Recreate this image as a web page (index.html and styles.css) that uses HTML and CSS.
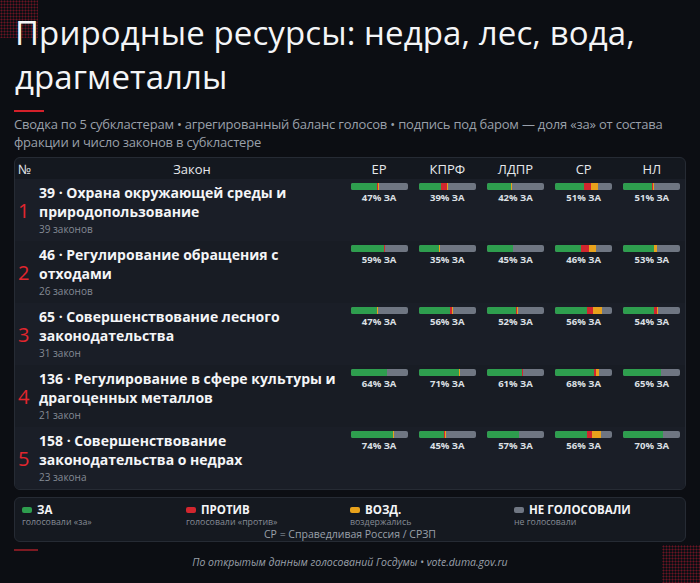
FILE: index.html
```html
<!DOCTYPE html>
<html lang="ru">
<head>
<meta charset="utf-8">
<link rel="stylesheet" href="styles.css">
</head>
<body>
<div class="dots dots-tl"></div>
<div class="dots dots-br"></div>
<main class="page">
  <h1 class="title">Природные ресурсы: недра, лес, вода, драгметаллы</h1>
  <div class="accent"></div>
  <p class="subtitle">Сводка по 5 субкластерам • агрегированный баланс голосов • подпись под баром — доля «за» от состава фракции и число законов в субкластере</p>

  <section class="table">
    <div class="row head">
      <div class="c-num">№</div>
      <div class="c-law">Закон</div>
      <div class="c-party">ЕР</div>
      <div class="c-party">КПРФ</div>
      <div class="c-party">ЛДПР</div>
      <div class="c-party">СР</div>
      <div class="c-party">НЛ</div>
    </div>

    <div class="row body odd">
      <div class="c-num num">1</div>
      <div class="c-law law"><div class="law-title">39 · Охрана окружающей среды и природопользование</div><div class="law-count">39 законов</div></div>
      <div class="cell"><div class="bar"><span class="g" style="width:47%"></span><span class="r" style="width:0.6%"></span><span class="o" style="width:1.2%"></span></div><div class="pct">47% ЗА</div></div>
      <div class="cell"><div class="bar"><span class="g" style="width:39%"></span><span class="r" style="width:10.5%"></span><span class="o" style="width:0.5%"></span></div><div class="pct">39% ЗА</div></div>
      <div class="cell"><div class="bar"><span class="g" style="width:42%"></span><span class="r" style="width:0.5%"></span><span class="o" style="width:1.2%"></span></div><div class="pct">42% ЗА</div></div>
      <div class="cell"><div class="bar"><span class="g" style="width:50.5%"></span><span class="r" style="width:12.5%"></span><span class="o" style="width:11.5%"></span></div><div class="pct">51% ЗА</div></div>
      <div class="cell"><div class="bar"><span class="g" style="width:51%"></span><span class="r" style="width:0.8%"></span><span class="o" style="width:1.5%"></span></div><div class="pct">51% ЗА</div></div>
    </div>

    <div class="row body even">
      <div class="c-num num">2</div>
      <div class="c-law law"><div class="law-title">46 · Регулирование обращения с отходами</div><div class="law-count">26 законов</div></div>
      <div class="cell"><div class="bar"><span class="g" style="width:58.5%"></span><span class="r" style="width:1%"></span></div><div class="pct">59% ЗА</div></div>
      <div class="cell"><div class="bar"><span class="g" style="width:35%"></span><span class="o" style="width:1.2%"></span></div><div class="pct">35% ЗА</div></div>
      <div class="cell"><div class="bar"><span class="g" style="width:45%"></span></div><div class="pct">45% ЗА</div></div>
      <div class="cell"><div class="bar"><span class="g" style="width:46%"></span><span class="r" style="width:13%"></span><span class="o" style="width:13%"></span></div><div class="pct">46% ЗА</div></div>
      <div class="cell"><div class="bar"><span class="g" style="width:53%"></span><span class="r" style="width:1.6%"></span><span class="o" style="width:5%"></span></div><div class="pct">53% ЗА</div></div>
    </div>

    <div class="row body odd">
      <div class="c-num num">3</div>
      <div class="c-law law"><div class="law-title">65 · Совершенствование лесного законодательства</div><div class="law-count">31 закон</div></div>
      <div class="cell"><div class="bar"><span class="g" style="width:46.5%"></span><span class="o" style="width:2%"></span></div><div class="pct">47% ЗА</div></div>
      <div class="cell"><div class="bar"><span class="g" style="width:55.5%"></span><span class="r" style="width:3%"></span><span class="o" style="width:1.2%"></span></div><div class="pct">56% ЗА</div></div>
      <div class="cell"><div class="bar"><span class="g" style="width:51.5%"></span><span class="r" style="width:2%"></span><span class="o" style="width:1.8%"></span></div><div class="pct">52% ЗА</div></div>
      <div class="cell"><div class="bar"><span class="g" style="width:56%"></span><span class="r" style="width:11%"></span><span class="o" style="width:15%"></span></div><div class="pct">56% ЗА</div></div>
      <div class="cell"><div class="bar"><span class="g" style="width:54%"></span><span class="r" style="width:4.6%"></span><span class="o" style="width:2%"></span></div><div class="pct">54% ЗА</div></div>
    </div>

    <div class="row body even">
      <div class="c-num num">4</div>
      <div class="c-law law"><div class="law-title">136 · Регулирование в сфере культуры и драгоценных металлов</div><div class="law-count">21 закон</div></div>
      <div class="cell"><div class="bar"><span class="g" style="width:64%"></span></div><div class="pct">64% ЗА</div></div>
      <div class="cell"><div class="bar"><span class="g" style="width:71%"></span><span class="o" style="width:1.2%"></span></div><div class="pct">71% ЗА</div></div>
      <div class="cell"><div class="bar"><span class="g" style="width:60.8%"></span><span class="r" style="width:1.6%"></span></div><div class="pct">61% ЗА</div></div>
      <div class="cell"><div class="bar"><span class="g" style="width:68%"></span><span class="r" style="width:3%"></span><span class="o" style="width:6%"></span></div><div class="pct">68% ЗА</div></div>
      <div class="cell"><div class="bar"><span class="g" style="width:65.5%"></span></div><div class="pct">65% ЗА</div></div>
    </div>

    <div class="row body odd">
      <div class="c-num num">5</div>
      <div class="c-law law"><div class="law-title">158 · Совершенствование законодательства о недрах</div><div class="law-count">23 закона</div></div>
      <div class="cell"><div class="bar"><span class="g" style="width:73.7%"></span><span class="o" style="width:1.6%"></span></div><div class="pct">74% ЗА</div></div>
      <div class="cell"><div class="bar"><span class="g" style="width:44.5%"></span><span class="r" style="width:1%"></span><span class="o" style="width:1.2%"></span></div><div class="pct">45% ЗА</div></div>
      <div class="cell"><div class="bar"><span class="g" style="width:57%"></span></div><div class="pct">57% ЗА</div></div>
      <div class="cell"><div class="bar"><span class="g" style="width:56%"></span><span class="r" style="width:9.5%"></span><span class="o" style="width:15%"></span></div><div class="pct">56% ЗА</div></div>
      <div class="cell"><div class="bar"><span class="g" style="width:70%"></span></div><div class="pct">70% ЗА</div></div>
    </div>
  </section>

  <section class="legend">
    <div class="legend-items">
      <div class="li"><div class="li-head"><span class="sw sw-g"></span>ЗА</div><div class="li-sub">голосовали «за»</div></div>
      <div class="li"><div class="li-head"><span class="sw sw-r"></span>ПРОТИВ</div><div class="li-sub">голосовали «против»</div></div>
      <div class="li"><div class="li-head"><span class="sw sw-o"></span>ВОЗД.</div><div class="li-sub">воздержались</div></div>
      <div class="li"><div class="li-head"><span class="sw sw-n"></span>НЕ ГОЛОСОВАЛИ</div><div class="li-sub">не голосовали</div></div>
    </div>
    <div class="legend-note">СР = Справедливая Россия / СРЗП</div>
  </section>

  <div class="accent accent-dim"></div>
  <footer class="footer">По открытым данным голосований Госдумы • vote.duma.gov.ru</footer>
</main>
</body>
</html>
```

FILE: styles.css
```css
* { box-sizing: border-box; }
html, body { margin: 0; padding: 0; }
body {
  background: #0c0e13;
  color: #f0f1f4;
  font-family: "Open Sans", "Noto Sans", sans-serif;
  width: 700px;
  height: 583px;
  overflow: hidden;
  position: relative;
}
.dots {
  position: absolute;
  width: 38px;
  height: 38px;
  background-image: radial-gradient(circle, #6a1422 0.9px, transparent 1.1px);
  background-size: 3px 3px;
  pointer-events: none;
}
.dots-tl { left: 0; top: 0; }
.dots-br { right: 0; bottom: 0; }

.page {
  position: relative;
  padding: 11px 14px 0 14px;
}
.title {
  margin: 0 0 0 1px;
  font-weight: 400;
  font-size: 33px;
  line-height: 44px;
  letter-spacing: 0.1px;
  color: #f4f5f7;
}
.accent {
  width: 30px;
  height: 2px;
  background: #d4202a;
  margin-top: 11px;
}
.subtitle {
  margin: 4px 0 0 0;
  font-size: 13px;
  letter-spacing: -0.2px;
  line-height: 17.5px;
  color: #9aa0aa;
}

.table {
  margin-top: 6px;
  border: 1px solid #262b34;
  border-radius: 6px;
  background: #14181f;
  overflow: hidden;
}
.row {
  display: grid;
  grid-template-columns: 24px 306px repeat(5, 68.2px);
}
.head {
  height: 21px;
  align-items: center;
  font-size: 13px;
  color: #e6e8ec;
}
.head .c-num { padding-left: 3px; }
.head .c-law { text-align: center; }
.head .c-party { text-align: center; }
.body { height: 62px; }
.odd { background: #1a1e27; }
.even { background: #181c24; }
.num {
  display: flex;
  align-items: center;
  padding-left: 3px;
  font-size: 20px;
  color: #e3262e;
}
.law { padding-top: 4px; }
.law-title {
  font-weight: 700;
  font-size: 14px;
  line-height: 19px;
  color: #f4f5f7;
}
.law-count {
  font-size: 10px;
  line-height: 16px;
  color: #858b95;
}
.cell {
  padding-top: 4px;
  display: flex;
  flex-direction: column;
  align-items: center;
}
.bar {
  width: 57px;
  height: 7px;
  border-radius: 2px;
  background: #6f7682;
  display: flex;
  overflow: hidden;
}
.bar span { display: block; height: 100%; }
.bar .g { background: #2e9e4e; }
.bar .r { background: #d2262e; }
.bar .o { background: #e8a21c; }
.pct {
  margin-top: 2px;
  font-size: 9.5px;
  font-weight: 700;
  line-height: 12px;
  color: #dde0e5;
}

.legend {
  margin-top: 7px;
  border: 1px solid #262b34;
  border-radius: 6px;
  background: #151920;
  padding: 4px 7px 1px 7px;
}
.legend-items {
  display: grid;
  grid-template-columns: repeat(4, 164px);
}
.li-head {
  display: flex;
  align-items: center;
  font-size: 11.5px;
  font-weight: 700;
  line-height: 15px;
  color: #f4f5f7;
}
.sw {
  width: 10px;
  height: 6px;
  border-radius: 2px;
  margin-right: 5px;
}
.sw-g { background: #2e9e4e; }
.sw-r { background: #d2262e; }
.sw-o { background: #e8a21c; }
.sw-n { background: #6f7682; }
.li-sub {
  font-size: 8.8px;
  line-height: 11px;
  color: #858b95;
}
.legend-note {
  text-align: center;
  font-size: 10.5px;
  line-height: 12px;
  color: #9aa0aa;
}
.accent-dim {
  background: #7d1a22;
  width: 24px;
  margin-top: 7px;
}
.footer {
  text-align: center;
  font-style: italic;
  font-size: 10.5px;
  line-height: 14px;
  color: #9aa0aa;
  margin-top: 4px;
}
```
